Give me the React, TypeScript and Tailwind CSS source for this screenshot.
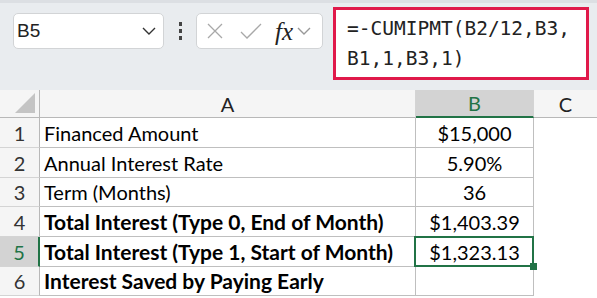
import { ReactNode } from "react"

const rows = [
  { n: 1, a: "Financed Amount", b: "$15,000", bold: false, h: "h-[30px]" },
  { n: 2, a: "Annual Interest Rate", b: "5.90%", bold: false, h: "h-[30px]" },
  { n: 3, a: "Term (Months)", b: "36", bold: false, h: "h-[29px]" },
  { n: 4, a: "Total Interest (Type 0, End of Month)", b: "$1,403.39", bold: true, h: "h-[30px]" },
  { n: 5, a: "Total Interest (Type 1, Start of Month)", b: "$1,323.13", bold: true, h: "h-[30px]" },
  { n: 6, a: "Interest Saved by Paying Early", b: "", bold: true, h: "h-[29px]" },
]

function Chevron({ className }: { className?: string }) {
  return (
    <svg width="14" height="8" viewBox="0 0 14 8" className={className}>
      <path d="M1 1 L7 7 L13 1" fill="none" stroke="currentColor" strokeWidth="1.4" />
    </svg>
  )
}

function HeaderCell({ children, active, className }: { children?: ReactNode; active?: boolean; className?: string }) {
  return (
    <div
      className={
        "flex items-center justify-center border-r border-[#d4d4d4] " +
        (active ? "bg-[#d3d3d3] text-[#217346] border-b-[2px] border-b-[#217346] " : "bg-[#f5f5f5] text-[#222] border-b border-b-[#b8b8b8] ") +
        (className || "")
      }
    >
      {children}
    </div>
  )
}

export default function App() {
  return (
    <div className="w-[597px] h-[298px] overflow-hidden bg-white" style={{ fontFamily: "Lato, 'Liberation Sans', sans-serif" }}>
      {/* Formula bar */}
      <div className="relative h-[90px] bg-[#e9ecef] flex items-start pt-[7px]">
        <div className="absolute top-0 left-0 right-0 h-[3px] bg-[#dcdfe3]" />
        <div className="ml-[13px] mt-[6px] w-[151px] h-[36px] bg-white border border-[#d2d4d6] rounded-[5px] flex items-center justify-between pl-[3px] pr-[7px]">
          <span className="text-[19px] text-[#222]" style={{ fontFamily: "'Liberation Sans', sans-serif" }}>B5</span>
          <Chevron className="text-[#333]" />
        </div>
        <div className="w-[32px] mt-[6px] h-[36px] flex flex-col items-center justify-center gap-[3px]">
          <div className="w-[3px] h-[4px] bg-[#444]" />
          <div className="w-[3px] h-[4px] bg-[#444]" />
          <div className="w-[3px] h-[4px] bg-[#444]" />
        </div>
        <div className="mt-[6px] w-[127px] h-[36px] bg-white border border-[#d2d4d6] rounded-[5px] flex items-center pl-[10px]">
          <svg width="16" height="16" viewBox="0 0 16 16">
            <path d="M1 1 L15 15 M15 1 L1 15" stroke="#a8a8a8" strokeWidth="1.3" />
          </svg>
          <svg width="22" height="16" viewBox="0 0 22 16" className="ml-[17px]">
            <path d="M1 9 L7 15 L21 1" fill="none" stroke="#a8a8a8" strokeWidth="1.3" />
          </svg>
          <span
            className="ml-[13px] text-[25px] italic leading-none text-[#222]"
            style={{ fontFamily: "'Liberation Serif', serif" }}
          >
            fx
          </span>
          <Chevron className="ml-[4px] text-[#999]" />
        </div>
        <div
          className="ml-[10px] w-[256px] h-[73px] bg-white border-[3px] border-[#e0194a] pl-[11px] pt-[4px] text-[19.5px] leading-[30px] text-[#222]"
          style={{ fontFamily: "'DejaVu Sans Mono', monospace" }}
        >
          <div>=-CUMIPMT(B2/12,B3,</div>
          <div>B1,1,B3,1)</div>
        </div>
      </div>

      {/* Grid */}
      <div className="text-[20px] text-black">
        <div className="flex h-[28px]">
          <div className="w-[40px] bg-[#f5f5f5] border-r border-[#b8b8b8] border-b border-b-[#b8b8b8] relative">
            <svg width="20" height="20" viewBox="0 0 20 20" className="absolute right-[4px] bottom-[4px]">
              <path d="M20 0 L20 20 L0 20 Z" fill="#c4c4c4" />
            </svg>
          </div>
          <HeaderCell className="w-[376px]">A</HeaderCell>
          <HeaderCell active className="w-[118px]">B</HeaderCell>
          <HeaderCell className="flex-1 border-r-0">C</HeaderCell>
        </div>
        {rows.map((r) => (
          <div key={r.n} className={"flex " + r.h}>
            <div
              className={
                "w-[40px] flex items-center justify-center border-b border-[#d4d4d4] " +
                (r.n === 5
                  ? "bg-[#d3d3d3] text-[#217346] border-r-[2px] border-r-[#217346]"
                  : "bg-[#f5f5f5] text-[#333] border-r border-r-[#b8b8b8]")
              }
            >
              {r.n}
            </div>
            <div
              className={
                "w-[376px] flex items-center pl-[4px] border-r border-b border-[#bfbfbf] whitespace-nowrap " +
                (r.bold ? "font-bold text-[21px]" : "")
              }
            >
              {r.a}
            </div>
            <div className="w-[118px] relative flex items-center justify-center border-r border-b border-[#bfbfbf]">
              {r.b}
              {r.n === 5 && (
                <>
                  <div className="absolute z-10 -left-[2px] -top-[1px] -right-[1px] -bottom-[1px] border-2 border-[#217346]" />
                  <div className="absolute z-20 -right-[4px] -bottom-[4px] w-[7px] h-[7px] bg-[#217346]" />
                </>
              )}
            </div>
            <div className="flex-1" />
          </div>
        ))}
      </div>
    </div>
  )
}
